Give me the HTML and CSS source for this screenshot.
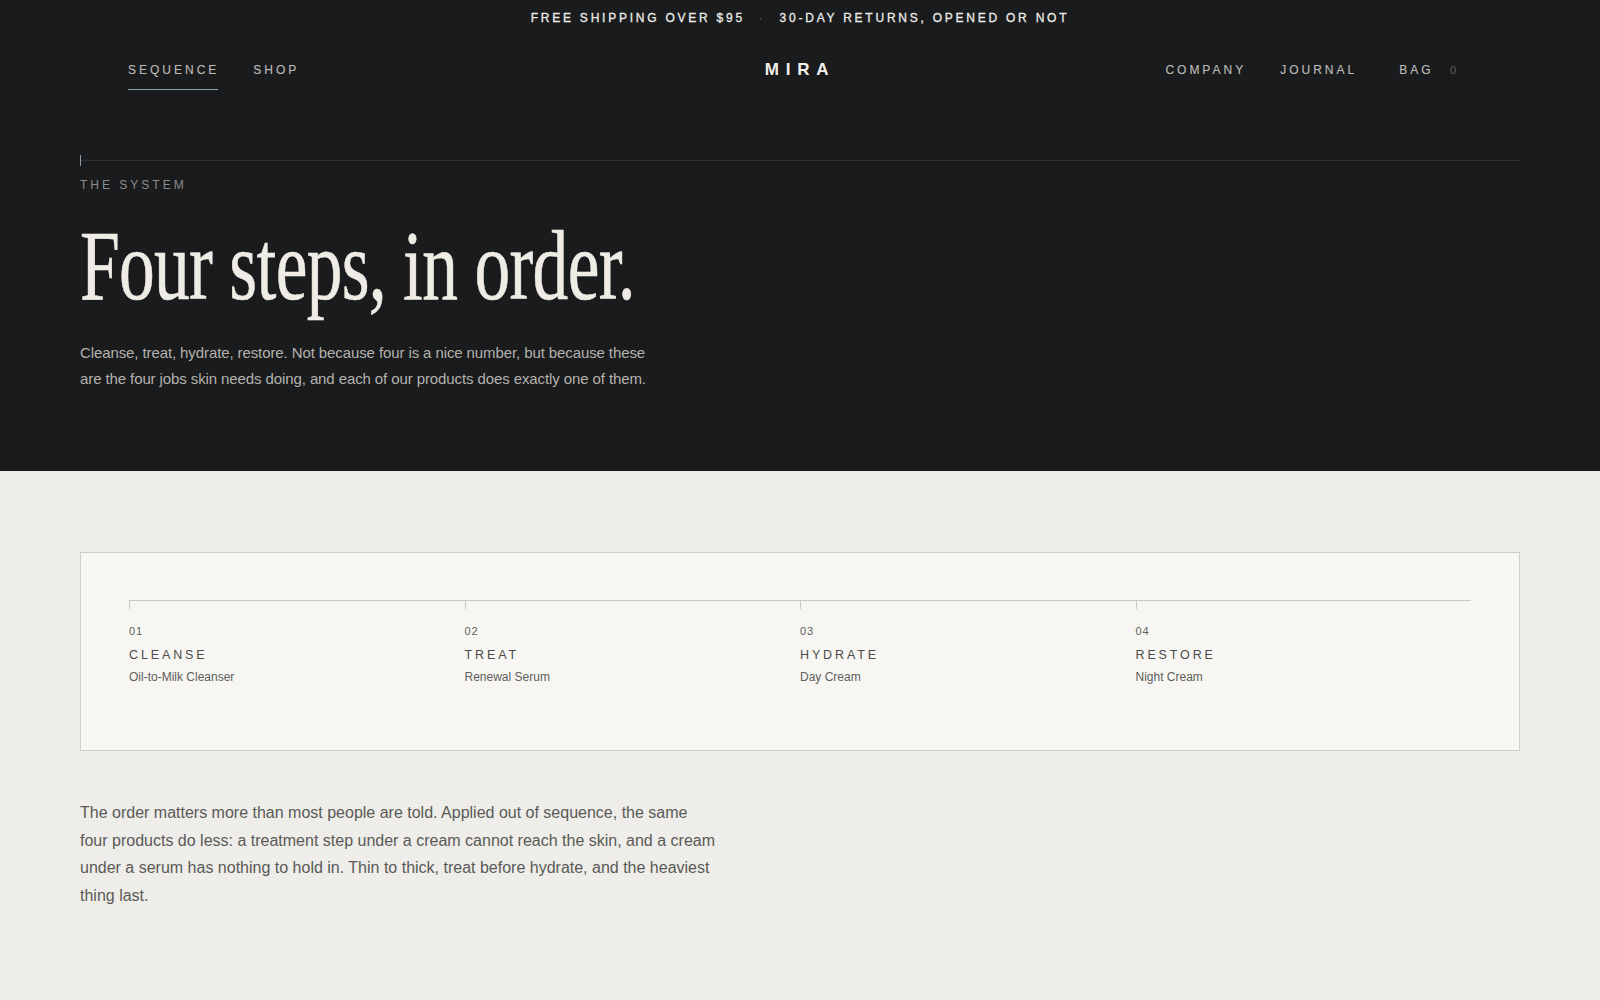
FILE: index.html
```html
<!DOCTYPE html>
<html lang="en">
<head>
<meta charset="utf-8">
<title>MIRA — The System</title>
<link rel="stylesheet" href="styles.css">
</head>
<body>
<header class="masthead">
  <div class="promo">
    <span>FREE SHIPPING OVER $95</span>
    <span class="promo-dot">·</span>
    <span>30-DAY RETURNS, OPENED OR NOT</span>
  </div>
  <nav class="nav">
    <div class="nav-left">
      <a class="nav-link is-active" href="#">SEQUENCE</a>
      <a class="nav-link" href="#">SHOP</a>
    </div>
    <div class="logo">MIRA</div>
    <div class="nav-right">
      <a class="nav-link" href="#">COMPANY</a>
      <a class="nav-link" href="#">JOURNAL</a>
      <a class="nav-link bag" href="#">BAG <span class="bag-count">0</span></a>
    </div>
  </nav>
  <section class="hero">
    <div class="hero-rule"></div>
    <div class="eyebrow">THE SYSTEM</div>
    <h1 class="hero-title"><span>Four steps, in order.</span></h1>
    <p class="hero-copy">Cleanse, treat, hydrate, restore. Not because four is a nice number, but because these are the four jobs skin needs doing, and each of our products does exactly one of them.</p>
  </section>
</header>

<main class="content">
  <div class="steps-card">
    <ol class="steps">
      <li class="step">
        <div class="step-num">01</div>
        <div class="step-name">CLEANSE</div>
        <div class="step-product">Oil-to-Milk Cleanser</div>
      </li>
      <li class="step">
        <div class="step-num">02</div>
        <div class="step-name">TREAT</div>
        <div class="step-product">Renewal Serum</div>
      </li>
      <li class="step">
        <div class="step-num">03</div>
        <div class="step-name">HYDRATE</div>
        <div class="step-product">Day Cream</div>
      </li>
      <li class="step">
        <div class="step-num">04</div>
        <div class="step-name">RESTORE</div>
        <div class="step-product">Night Cream</div>
      </li>
    </ol>
  </div>
  <p class="body-copy">The order matters more than most people are told. Applied out of sequence, the same four products do less: a treatment step under a cream cannot reach the skin, and a cream under a serum has nothing to hold in. Thin to thick, treat before hydrate, and the heaviest thing last.</p>
</main>
</body>
</html>
```

FILE: styles.css
```css
* { box-sizing: border-box; }

html, body {
  margin: 0;
  padding: 0;
}

body {
  background: #eeede9;
  font-family: "Liberation Sans", Arial, sans-serif;
  color: #555;
}

a { color: inherit; text-decoration: none; }

.masthead {
  background: #1a1b1d;
  color: #e9e7e2;
}

.promo {
  height: 35px;
  display: flex;
  justify-content: center;
  align-items: center;
  gap: 14px;
  font-size: 12px;
  letter-spacing: 0.23em;
  color: #ecebe7;
  -webkit-text-stroke: 0.3px #ecebe7;
  padding-top: 1px;
}

.promo-dot {
  color: #666;
  -webkit-text-stroke: 0;
}

.nav {
  height: 69px;
  margin: 0 80px;
  padding: 0 48px;
  display: grid;
  grid-template-columns: 1fr auto 1fr;
  align-items: center;
}

.nav-left, .nav-right {
  display: flex;
  align-items: center;
  gap: 34px;
}

.nav-right {
  justify-content: flex-end;
  padding-right: 16px;
}

.nav-link {
  position: relative;
  font-size: 12px;
  letter-spacing: 0.25em;
  color: #bbbab6;
  -webkit-text-stroke: 0.15px #bbbab6;
}

.nav-link.is-active::after {
  content: "";
  position: absolute;
  left: 0;
  right: 1px;
  bottom: -13px;
  height: 1px;
  background: #8ea1ad;
}

.bag { margin-left: 8px; }

.bag-count {
  margin-left: 10px;
  font-size: 11px;
  letter-spacing: 0;
  color: #5e5f60;
  -webkit-text-stroke: 0;
}

.logo {
  font-size: 17px;
  letter-spacing: 0.4em;
  color: #f1efea;
  font-weight: 700;
}

.hero {
  margin: 0 80px;
  padding: 56px 0 80px;
}

.hero-rule {
  position: relative;
  height: 1px;
  background: #2f3033;
}

.hero-rule::before {
  content: "";
  position: absolute;
  left: 0;
  top: -5px;
  width: 1px;
  height: 11px;
  background: #8d9eab;
}

.eyebrow {
  margin-top: 16px;
  font-size: 12px;
  line-height: 16px;
  letter-spacing: 0.25em;
  color: #8c8c8a;
}

.hero-title {
  margin: 23px 0 0;
  font-family: "Liberation Serif", "Times New Roman", serif;
  font-weight: 400;
  font-size: 100px;
  line-height: 1;
  color: #efece6;
  white-space: nowrap;
}

.hero-title span {
  display: inline-block;
  transform: scaleX(0.715);
  transform-origin: left center;
  letter-spacing: -1px;
  -webkit-text-stroke: 0.6px #efece6;
}

.hero-copy {
  margin: 24px 0 0;
  max-width: 580px;
  font-size: 15px;
  line-height: 25.5px;
  letter-spacing: -0.1px;
  color: #b4b2ad;
}

.content {
  margin: 0 80px;
  padding: 81px 0 90px;
}

.steps-card {
  background: #f7f6f2;
  border: 1px solid #cfcdc8;
  padding: 47px 48px 48px;
}

.steps {
  list-style: none;
  margin: 0;
  padding: 0;
  display: grid;
  grid-template-columns: repeat(4, 1fr);
}

.step {
  position: relative;
  border-top: 1px solid #c9c7c2;
  padding: 23px 0 17px;
}

.step::before {
  content: "";
  position: absolute;
  left: 0;
  top: 0;
  width: 1px;
  height: 8px;
  background: #c9c7c2;
}

.step-num {
  font-size: 11px;
  line-height: 14px;
  letter-spacing: 0.08em;
  color: #5f5f5d;
}

.step-name {
  margin-top: 9px;
  font-size: 12.5px;
  line-height: 16px;
  letter-spacing: 0.23em;
  color: #4b4b49;
}

.step-product {
  margin-top: 6px;
  font-size: 12px;
  line-height: 16px;
  color: #5e5e5c;
}

.body-copy {
  margin: 48px 0 0;
  max-width: 637px;
  font-size: 16px;
  line-height: 27.5px;
  color: #5a5a57;
}
```
